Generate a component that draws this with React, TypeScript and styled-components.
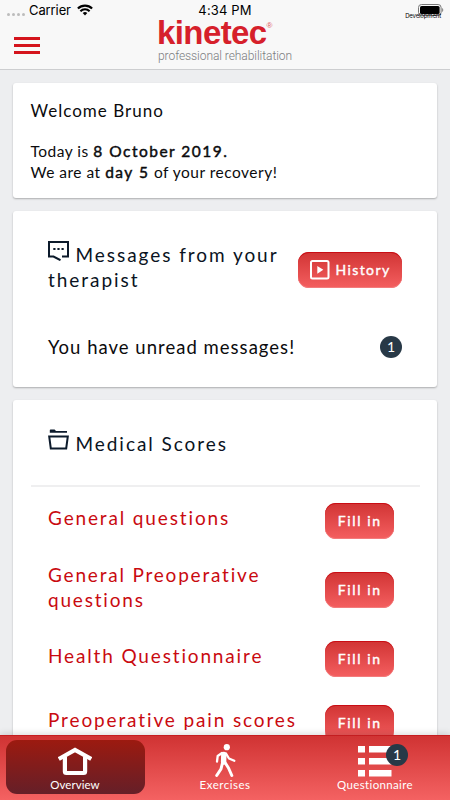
import React from 'react';
import styled, { createGlobalStyle } from 'styled-components';

const GlobalStyle = createGlobalStyle`
  * { box-sizing: border-box; }
  body { margin: 0; font-family: Lato, "Open Sans", sans-serif; color: #0b0b0d; }
`;

const Screen = styled.div`
  width: 450px;
  height: 800px;
  display: flex;
  flex-direction: column;
  background: #edeef0;
  overflow: hidden;
`;

const Header = styled.header`
  height: 70px;
  flex: none;
  background: #f8f8f8;
  border-bottom: 1px solid #cdced0;
`;

const StatusBar = styled.div`
  position: relative;
  height: 20px;
  display: grid;
  grid-template-columns: 1fr auto 1fr;
  align-items: center;
  padding: 0 6px;
  font: 400 13px/20px Inter, sans-serif;
  color: #000;
`;

const Signal = styled.div`
  display: flex;
  align-items: center;
  svg { display: block; }
`;

const Dots = styled.span`
  display: flex;
  gap: 2px;
  margin: 8px 4px 0 1px;
  i { width: 3px; height: 3px; border-radius: 50%; background: #bcbcbc; }
`;

const Carrier = styled.span`
  letter-spacing: -0.1px;
  margin-right: 6px;
`;

const Clock = styled.span`
  letter-spacing: 0.15px;
`;

const Battery = styled.div`
  justify-self: end;
  svg { display: block; }
`;

const BuildTag = styled.span`
  position: absolute;
  right: 9px;
  top: 12px;
  font-size: 6px;
  line-height: 8px;
  letter-spacing: -0.15px;
`;

const NavBar = styled.div`
  height: 49px;
  display: grid;
  grid-template-columns: 1fr 134px 1fr;
  padding: 0 14px;
`;

const MenuButton = styled.button`
  width: 26px;
  height: 17px;
  margin-top: 17px;
  padding: 0;
  border: 0;
  background: none;
  display: flex;
  flex-direction: column;
  justify-content: space-between;
  span { height: 2.6px; width: 25.5px; background: #d4141c; }
`;

const Brand = styled.div`
  white-space: nowrap;
`;

const BrandName = styled.div`
  display: flex;
  align-items: flex-start;
  height: 27px;
  font: 700 33px/26px "Liberation Sans", sans-serif;
  letter-spacing: -0.6px;
  color: #d6202b;
  margin-left: -1px;
  sup { font: 400 8px/10px "Liberation Sans", sans-serif; margin-top: 1px; color: #dd5a60; }
`;

const BrandTag = styled.div`
  font: 300 12px/19px Roboto, sans-serif;
  letter-spacing: -0.06px;
  color: #7b7c80;
`;

const Main = styled.main`
  flex: 1;
  min-height: 0;
  overflow: hidden;
  padding: 13px 13px 0;
  display: flex;
  flex-direction: column;
  gap: 13px;
`;

const Card = styled.section<{ $height: number; $pad: string }>`
  height: ${p => p.$height}px;
  flex: none;
  padding: ${p => p.$pad};
  background: #fff;
  border-radius: 3px;
  box-shadow: 0 1px 2px rgba(0, 0, 0, 0.28);
`;

const Welcome = styled.h1`
  margin: 0 0 20px;
  font-size: 17px;
  font-weight: 400;
  line-height: 20px;
  letter-spacing: 1.02px;
`;

const Info = styled.p`
  margin: 0;
  font-size: 15.5px;
  line-height: 21px;
  letter-spacing: 0.5px;
  white-space: nowrap;
`;

const Strong = styled.b`
  font-weight: 400;
  letter-spacing: 1.5px;
  -webkit-text-stroke: 0.45px currentColor;
`;

const Row = styled.div`
  display: flex;
  justify-content: space-between;
`;

const Heading = styled.h2`
  margin: 0;
  font-size: 19px;
  font-weight: 400;
  line-height: 25px;
  letter-spacing: 1.95px;
  white-space: nowrap;
  color: #0a1322;
  svg { margin: -4px 6.5px 0 0; vertical-align: 1px; }
`;

const Button = styled.button<{ $width: number }>`
  flex: none;
  width: ${p => p.$width}px;
  height: 36.5px;
  border: 0;
  border-radius: 11px;
  padding: 0 0 0 1px;
  display: flex;
  align-items: center;
  justify-content: center;
  gap: 5px;
  background: linear-gradient(#d13434, #f45f60);
  box-shadow: inset 0 1px 0 #c90d14, inset 0 -1px 0 #f37b7c;
  color: #fff;
  font: 400 14px/18px Lato, sans-serif;
  -webkit-text-stroke: 0.4px currentColor;
  letter-spacing: 1.6px;
`;

const HistoryButton = styled(Button)`
  margin-top: 10px;
  height: 36px;
  letter-spacing: 1.4px;
`;

const Notice = styled(Row)`
  margin-top: 44px;
  font-size: 18.5px;
  line-height: 23px;
  letter-spacing: 1.02px;
`;

const Count = styled.span`
  width: 22px;
  height: 22px;
  border-radius: 50%;
  background: #283947;
  color: #fff;
  font: 400 14px/22px Lato, sans-serif;
  letter-spacing: 0;
  text-align: center;
`;

const Divider = styled.hr`
  height: 2px;
  margin: 29px 0 16px -17.5px;
  width: 389.5px;
  border: 0;
  background: #efeff0;
`;

const ScoreList = styled.div`
  display: flex;
  flex-direction: column;
  gap: 28px;
`;

const Score = styled.div<{ $tall?: boolean }>`
  height: ${p => (p.$tall ? 45.5 : 36.5)}px;
  display: flex;
  align-items: center;
  justify-content: space-between;
  padding-right: 8.5px;
`;

const ScoreTitle = styled.h3<{ $tall?: boolean; $spacing: number }>`
  margin: ${p => (p.$tall ? '-6px' : '-7px')} 0 0;
  font-size: 19px;
  font-weight: 400;
  line-height: 25px;
  letter-spacing: ${p => p.$spacing}px;
  white-space: nowrap;
  color: #c90a10;
`;

const TabBar = styled.nav`
  position: relative;
  flex: none;
  height: 65px;
  display: grid;
  grid-template-columns: repeat(3, 1fr);
  padding: 4px 0 6px;
  border-top: 1px solid #c51d20;
  background: linear-gradient(#d03333, #f46262);
  box-shadow: 0 -1px 7px rgba(0, 0, 0, 0.16);
`;

const Tab = styled.a<{ $active?: boolean; $spacing: number }>`
  margin: 0 5.5px;
  border-radius: 11px;
  display: flex;
  flex-direction: column;
  align-items: center;
  color: #fff;
  font-size: 11.5px;
  line-height: 14px;
  letter-spacing: ${p => p.$spacing}px;
  background: ${p => (p.$active ? 'linear-gradient(#9c1a10, #651f28)' : 'none')};
`;

const TabIcon = styled.span<{ $top: number }>`
  position: relative;
  height: 38px;
  padding-top: ${p => p.$top}px;
  display: flex;
  align-items: flex-start;
  svg { display: block; }
`;

const TabCount = styled(Count)`
  position: absolute;
  left: 28px;
  top: 3.5px;
`;

const WifiIcon = () => (
  <svg width="16" height="12" viewBox="0 0 16 12" fill="none" stroke="#000" strokeWidth="2.1">
    <path d="M0.9 4.6a10 10 0 0 1 14.2 0M3.4 7.2a6.5 6.5 0 0 1 9.2 0" />
    <path d="M8 11.4 5.7 9a3.3 3.3 0 0 1 4.6 0z" fill="#000" stroke="none" />
  </svg>
);

const BatteryIcon = () => (
  <svg width="26" height="12" viewBox="0 0 26 12">
    <rect x="0.5" y="0.5" width="22.6" height="11" rx="3" fill="none" stroke="#777" />
    <rect x="2" y="2" width="19.6" height="8" rx="1.6" />
    <path d="M24.2 4v4c1.4-.6 1.4-3.4 0-4z" fill="#777" />
  </svg>
);

const MessageIcon = () => (
  <svg width="21" height="20" viewBox="0 0 21 20" fill="none" stroke="#0c1a2b" strokeWidth="2">
    <path d="M14 15.5h6V1H1v14.500h4.500l7 3.700" />
    <path d="M5.300 8h2.200M9.400 8h2.200M13.500 8h2.200" />
  </svg>
);

const FolderIcon = () => (
  <svg width="21" height="21" viewBox="0 0 21 21" fill="none" stroke="#0c1a2b" strokeWidth="2">
    <path d="M1.200 7.500h18.600l-1.600 12H2.800z" />
    <path d="M1.800 3.800V1.200q0-.7.8-.7h4l1.400 1.600h11v1.700z" fill="#0c1a2b" stroke="none" />
  </svg>
);

const PlayIcon = () => (
  <svg width="20" height="20" viewBox="0 0 20 20">
    <rect x="1" y="1" width="17.500" height="17.500" rx="1.500" fill="none" stroke="#fff" strokeWidth="2" />
    <path d="M7.300 6v7.700l6-3.850z" fill="#fff" />
  </svg>
);

const HomeIcon = () => (
  <svg width="34" height="29" viewBox="0 0 34 29" fill="none" stroke="#fff">
    <path d="M2.600 11 17 2.900 31.400 11" strokeWidth="4.200" strokeLinecap="square" />
    <path d="M6.900 10v14.500q0 1.500 1.500 1.500h17.200q1.500 0 1.500-1.500V10" strokeWidth="4.200" />
  </svg>
);

const WalkIcon = () => (
  <svg width="21" height="34" viewBox="0 0 21 34" fill="none" stroke="#fff" strokeLinecap="round" strokeLinejoin="round">
    <circle cx="11.800" cy="3.200" r="3.100" fill="#fff" stroke="none" />
    <path d="M8.800 10.500 8.600 18" strokeWidth="5.400" />
    <path d="M7 9 2.700 12 2 17.500M11 9.500l3 5 5.300 2.300" strokeWidth="2.300" />
    <path d="M7.600 18.500 6 25l-4.300 6.500M10 18.500l3.500 5.500 3.300 7.500" strokeWidth="3" />
  </svg>
);

const ListIcon = () => (
  <svg width="34" height="31" viewBox="0 0 34 31" fill="#fff">
    <path d="M0 0h7v6.600H0zM11 0h22.500v6.600H11zM0 12h7v6.600H0zM11 12h22.500v6.600H11zM0 24h7v6.600H0zM11 24h22.500v6.600H11z" />
  </svg>
);

const scores: { title: string[]; spacing: number }[] = [
  { title: ['General questions'], spacing: 1.86 },
  { title: ['General Preoperative', 'questions'], spacing: 1.8 },
  { title: ['Health Questionnaire'], spacing: 1.85 },
  { title: ['Preoperative pain scores'], spacing: 1.87 },
];

export default function App() {
  return (
    <Screen>
      <GlobalStyle />
      <Header>
        <StatusBar>
          <Signal>
            <Dots><i /><i /><i /><i /></Dots>
            <Carrier>Carrier</Carrier>
            <WifiIcon />
          </Signal>
          <Clock>4:34 PM</Clock>
          <Battery><BatteryIcon /></Battery>
          <BuildTag>Development</BuildTag>
        </StatusBar>
        <NavBar>
          <MenuButton aria-label="Menu"><span /><span /><span /></MenuButton>
          <Brand>
            <BrandName>kinetec<sup>®</sup></BrandName>
            <BrandTag>professional rehabilitation</BrandTag>
          </Brand>
        </NavBar>
      </Header>
      <Main>
        <Card $height={115} $pad="18px 17.5px 0">
          <Welcome>Welcome Bruno</Welcome>
          <Info>Today is <Strong>8 October 2019.</Strong></Info>
          <Info>We are at <Strong>day 5</Strong> of your recovery!</Info>
        </Card>
        <Card $height={176} $pad="30.5px 35px 0">
          <Row>
            <Heading><MessageIcon />Messages from your<br />therapist</Heading>
            <HistoryButton $width={104}><PlayIcon />History</HistoryButton>
          </Row>
          <Notice>
            <span>You have unread messages!</span>
            <Count>1</Count>
          </Notice>
        </Card>
        <Card $height={420} $pad="30.5px 35px 0">
          <Heading><FolderIcon />Medical Scores</Heading>
          <Divider />
          <ScoreList>
            {scores.map(s => {
              const tall = s.title.length > 1;
              return (
                <Score key={s.title[0]} $tall={tall}>
                  <ScoreTitle $tall={tall} $spacing={s.spacing}>
                    {s.title.map(line => <div key={line}>{line}</div>)}
                  </ScoreTitle>
                  <Button $width={68.5}>Fill in</Button>
                </Score>
              );
            })}
          </ScoreList>
        </Card>
      </Main>
      <TabBar>
        <Tab $active $spacing={0.05}><TabIcon $top={6.5}><HomeIcon /></TabIcon>Overview</Tab>
        <Tab $spacing={0.5}><TabIcon $top={4}><WalkIcon /></TabIcon>Exercises</Tab>
        <Tab $spacing={0.35}><TabIcon $top={6}><ListIcon /><TabCount>1</TabCount></TabIcon>Questionnaire</Tab>
      </TabBar>
    </Screen>
  );
}
